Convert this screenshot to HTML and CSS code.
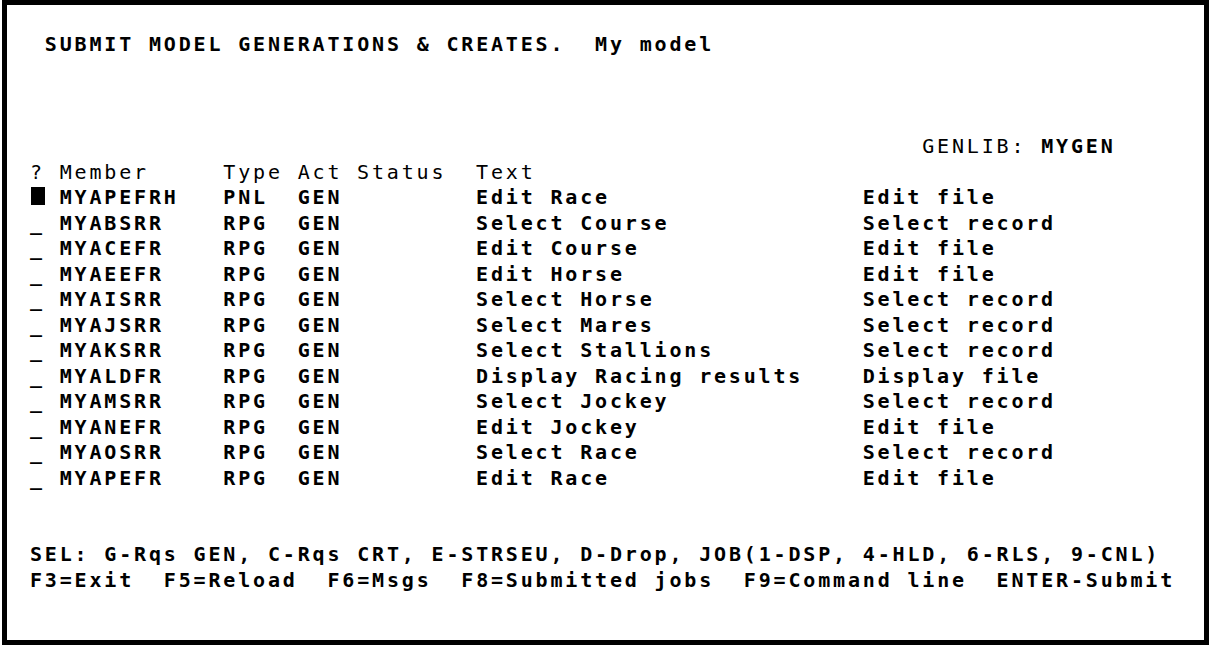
FILE: index.html
```html
<!DOCTYPE html>
<html>
<head>
<meta charset="utf-8">
<title>Submit model generations</title>
<link rel="stylesheet" href="styles.css">
</head>
<body>
<div class="screen">
  <div class="line"></div>
  <div class="line b"> SUBMIT MODEL GENERATIONS &amp; CREATES.  My model</div>
  <div class="line"></div>
  <div class="line"></div>
  <div class="line"></div>
  <div class="line genlib"><span>GENLIB: </span><span class="b">MYGEN</span></div>
  <div class="row head"><span>?</span><span>Member</span><span>Type</span><span>Act</span><span>Status</span><span>Text</span><span></span></div>
  <div class="row b"><span><span class="cursor"></span></span><span>MYAPEFRH</span><span>PNL</span><span>GEN</span><span></span><span>Edit Race</span><span>Edit file</span></div>
  <div class="row b"><span>_</span><span>MYABSRR</span><span>RPG</span><span>GEN</span><span></span><span>Select Course</span><span>Select record</span></div>
  <div class="row b"><span>_</span><span>MYACEFR</span><span>RPG</span><span>GEN</span><span></span><span>Edit Course</span><span>Edit file</span></div>
  <div class="row b"><span>_</span><span>MYAEEFR</span><span>RPG</span><span>GEN</span><span></span><span>Edit Horse</span><span>Edit file</span></div>
  <div class="row b"><span>_</span><span>MYAISRR</span><span>RPG</span><span>GEN</span><span></span><span>Select Horse</span><span>Select record</span></div>
  <div class="row b"><span>_</span><span>MYAJSRR</span><span>RPG</span><span>GEN</span><span></span><span>Select Mares</span><span>Select record</span></div>
  <div class="row b"><span>_</span><span>MYAKSRR</span><span>RPG</span><span>GEN</span><span></span><span>Select Stallions</span><span>Select record</span></div>
  <div class="row b"><span>_</span><span>MYALDFR</span><span>RPG</span><span>GEN</span><span></span><span>Display Racing results</span><span>Display file</span></div>
  <div class="row b"><span>_</span><span>MYAMSRR</span><span>RPG</span><span>GEN</span><span></span><span>Select Jockey</span><span>Select record</span></div>
  <div class="row b"><span>_</span><span>MYANEFR</span><span>RPG</span><span>GEN</span><span></span><span>Edit Jockey</span><span>Edit file</span></div>
  <div class="row b"><span>_</span><span>MYAOSRR</span><span>RPG</span><span>GEN</span><span></span><span>Select Race</span><span>Select record</span></div>
  <div class="row b"><span>_</span><span>MYAPEFR</span><span>RPG</span><span>GEN</span><span></span><span>Edit Race</span><span>Edit file</span></div>
  <div class="line"></div>
  <div class="line"></div>
  <div class="line b">SEL: G-Rqs GEN, C-Rqs CRT, E-STRSEU, D-Drop, JOB(1-DSP, 4-HLD, 6-RLS, 9-CNL)</div>
  <div class="line b">F3=Exit  F5=Reload  F6=Msgs  F8=Submitted jobs  F9=Command line  ENTER-Submit</div>
</div>
</body>
</html>
```
FILE: styles.css
```css
:root {
  --cw: 14.87px;
  --rh: 25.5px;
}

html, body {
  margin: 0;
  padding: 0;
  background: #fff;
}

.screen {
  margin-left: 2px;
  width: 1207px;
  height: 645px;
  box-sizing: border-box;
  border: 5px solid #000;
  padding: 1.5px 0 0 23px;
  font-family: "DejaVu Sans Mono", "Liberation Mono", monospace;
  font-size: 20px;
  letter-spacing: 2.83px;
  line-height: var(--rh);
  color: #000;
}

.line {
  height: var(--rh);
  white-space: pre;
}

.b {
  font-weight: bold;
}

.genlib {
  padding-left: calc(var(--cw) * 60);
}

.row {
  display: grid;
  grid-template-columns:
    calc(var(--cw) * 2)
    calc(var(--cw) * 11)
    calc(var(--cw) * 5)
    calc(var(--cw) * 4)
    calc(var(--cw) * 8)
    calc(var(--cw) * 26)
    1fr;
  height: var(--rh);
  white-space: pre;
}

.head {
  font-weight: normal;
}

.cursor {
  display: inline-block;
  width: 14px;
  height: 18px;
  margin-top: 2px;
  margin-left: 1px;
  background: #000;
  vertical-align: top;
}
```
